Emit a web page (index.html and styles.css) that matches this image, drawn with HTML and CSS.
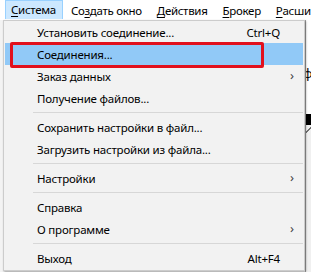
FILE: index.html
```html
<!DOCTYPE html>
<html lang="ru">
<head>
<meta charset="utf-8">
<link rel="stylesheet" href="styles.css">
</head>
<body>
<div class="window">
  <div class="menubar">
    <span class="mb-item active"><u>С</u>истема</span>
    <span class="mb-item">Со<u>з</u>дать окно</span>
    <span class="mb-item"><u>Д</u>ействия</span>
    <span class="mb-item"><u>Б</u>рокер</span>
    <span class="mb-item"><u>Р</u>асши</span>
  </div>
  <div class="workspace">
    <div class="ws-left"></div>
    <div class="ws-right">
      <div class="ws-white"><span class="ws-glyph">ф</span></div>
      <div class="ws-black"></div>
      <div class="ws-diag"></div>
      <div class="ws-gray"></div>
    </div>
  </div>

  <div class="dropdown">
    <div class="mi"><span class="label">Установить соединение...</span><span class="key">Ctrl+Q</span></div>
    <div class="mi hover"><span class="label">Соединения...</span><span class="key"></span></div>
    <div class="mi"><span class="label">Заказ данных</span><span class="key"></span><span class="arrow">&#x203A;</span></div>
    <div class="mi"><span class="label">Получение файлов...</span><span class="key"></span></div>
    <div class="sep"></div>
    <div class="mi"><span class="label">Сохранить настройки в файл...</span><span class="key"></span></div>
    <div class="mi"><span class="label">Загрузить настройки из файла...</span><span class="key"></span></div>
    <div class="sep"></div>
    <div class="mi"><span class="label">Настройки</span><span class="key"></span><span class="arrow">&#x203A;</span></div>
    <div class="sep"></div>
    <div class="mi"><span class="label">Справка</span><span class="key"></span></div>
    <div class="mi"><span class="label">О программе</span><span class="key"></span><span class="arrow">&#x203A;</span></div>
    <div class="sep"></div>
    <div class="mi"><span class="label">Выход</span><span class="key">Alt+F4</span></div>
    <div class="redbox"></div>
  </div>
</div>
</body>
</html>
```

FILE: styles.css
```css
* { box-sizing: border-box; }
html, body { margin: 0; padding: 0; }
body {
  width: 311px;
  height: 272px;
  overflow: hidden;
  font-family: "Noto Sans", "Open Sans", sans-serif;
  font-size: 11.5px;
  letter-spacing: -0.2px;
  color: #000;
  background: #f0f0f0;
}
.window {
  position: relative;
  width: 311px;
  height: 272px;
  overflow: hidden;
}
.menubar {
  height: 20px;
  background: #fff;
  display: flex;
  align-items: stretch;
  padding-left: 5px;
  gap: 2px;
  white-space: nowrap;
  overflow: hidden;
  letter-spacing: -0.3px;
}
.mb-item {
  display: flex;
  align-items: center;
  padding: 0 6px 1px 5px;
  border: 1px solid transparent;
  border-bottom: none;
}
.mb-item u { text-decoration-thickness: 1px; text-underline-offset: 2px; }
.mb-item.active {
  background: #cce8ff;
  border-color: #99d1ff;
  height: 19px;
}
.workspace {
  height: 252px;
  display: flex;
}
.ws-left { flex: 1; background: #f3f3f3; }
.ws-right {
  width: 6px;
  display: flex;
  flex-direction: column;
  border-left: 1px solid #a0a0a0;
}
.ws-white {
  height: 94px;
  background: #fff;
  position: relative;
  overflow: hidden;
}
.ws-glyph {
  position: absolute;
  left: -3px;
  top: 46px;
  font-size: 13px;
  line-height: 14px;
}
.ws-black { height: 11px; background: #000; }
.ws-diag {
  height: 10px;
  background: linear-gradient(135deg, #f0f0f0 40%, #707070 45%, #707070 55%, #f0f0f0 60%);
}
.ws-gray { flex: 1; background: #f0f0f0; }

.dropdown {
  position: absolute;
  left: 3px;
  top: 20px;
  width: 302px;
  height: 251px;
  background: #f2f2f2;
  border: 1px solid #cccccc;
  box-shadow: 1px 1px 2px rgba(0,0,0,0.35);
  padding: 0 1px;
}
.mi {
  height: 22px;
  display: grid;
  grid-template-columns: 1fr auto 22px;
  align-items: center;
  padding-left: 32px;
  white-space: nowrap;
}
.mi.hover { background: #91c9f7; }
.key { padding-right: 1px; }
.arrow {
  justify-self: center;
  font-size: 13px;
  color: #444;
  line-height: 1;
  margin-top: -2px;
}
.sep {
  height: 7px;
  margin-left: 28px;
  display: flex;
  align-items: center;
}
.sep::before {
  content: "";
  display: block;
  width: 100%;
  height: 1px;
  background: #d7d7d7;
}
.redbox {
  position: absolute;
  left: 6px;
  top: 21px;
  width: 254px;
  height: 26px;
  border: 3px solid #e2101c;
  border-radius: 2px;
}
```
